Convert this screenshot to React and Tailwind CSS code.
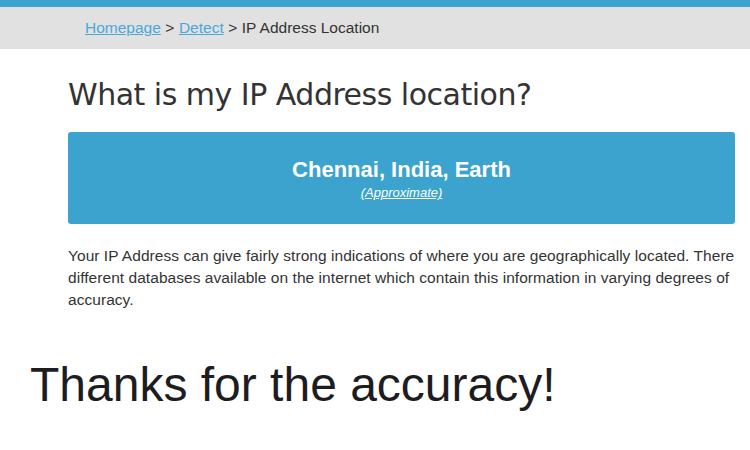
import React from 'react';

export default function App() {
  return (
    <div className="w-[750px] h-[450px] overflow-hidden bg-white">
      <div className="h-[7px] bg-[#3ba3cd]" />
      <div className="h-[42px] bg-[#e1e1e1] flex items-center pl-[85px] text-[15.5px] text-[#333] font-['Liberation_Sans',Arial,sans-serif]">
        <a href="#" className="text-[#4aa8d8] underline">Homepage</a>
        <span className="mx-[4.5px]">&gt;</span>
        <a href="#" className="text-[#4aa8d8] underline">Detect</a>
        <span className="mx-[4.5px]">&gt;</span>
        <span>IP Address Location</span>
      </div>
      <div className="pl-[68px] pr-[15px]">
        <h1 className="mt-[26px] text-[30px] leading-[40px] text-[#333] font-['DejaVu_Sans',sans-serif] tracking-[-0.5px]">
          What is my IP Address location?
        </h1>
        <div className="mt-[17px] h-[92px] rounded-[3px] bg-[#3ba3cd] flex flex-col items-center justify-center text-white font-['Liberation_Sans',Arial,sans-serif]">
          <div className="text-[22px] font-bold leading-[26px] mt-[2px]">Chennai, India, Earth</div>
          <a href="#" className="text-[13px] italic underline leading-[16px] mt-[2px]">(Approximate)</a>
        </div>
        <p className="mt-[21px] text-[15.5px] leading-[22px] text-[#333] font-['Liberation_Sans',Arial,sans-serif] tracking-[0.05px]">
          Your IP Address can give fairly strong indications of where you are geographically located. There different databases available on the internet which contain this information in varying degrees of accuracy.
        </p>
      </div>
      <div className="mt-[46px] pl-[30px] text-[48px] leading-[56px] text-[#1d1d1f] font-['Liberation_Sans',Arial,sans-serif]">
        Thanks for the accuracy!
      </div>
    </div>
  );
}
